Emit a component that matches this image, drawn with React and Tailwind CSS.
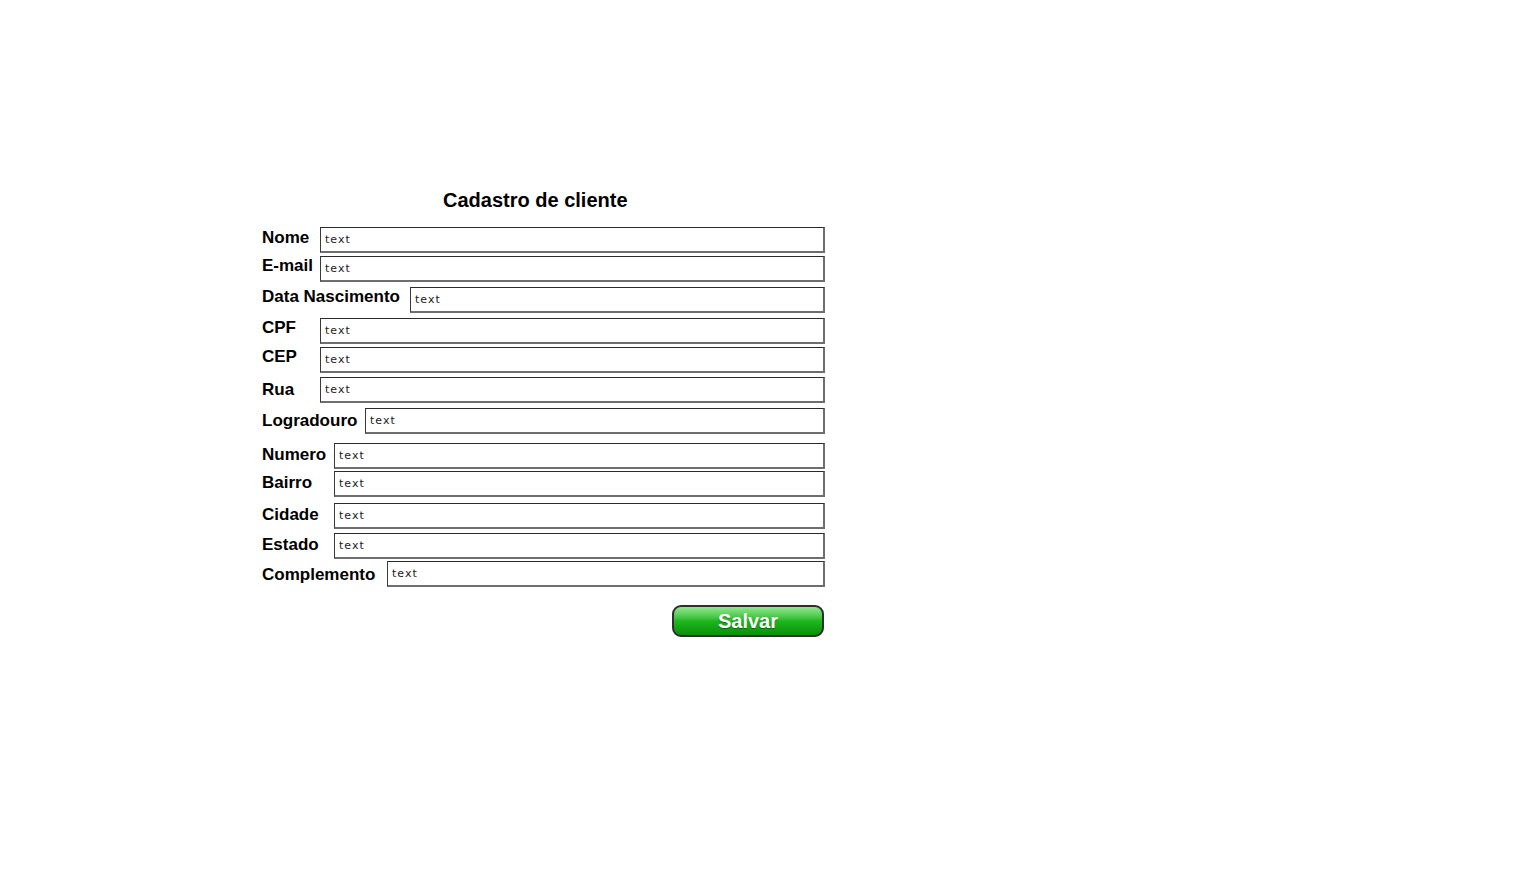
import React from "react";

const rows = [
  { label: "Nome", w: "w-[58px]", mt: "mt-0", pb: "pb-[4px]" },
  { label: "E-mail", w: "w-[58px]", mt: "mt-[3px]", pb: "pb-[6px]" },
  { label: "Data Nascimento", w: "w-[148px]", mt: "mt-[5px]", pb: "pb-[6px]" },
  { label: "CPF", w: "w-[58px]", mt: "mt-[5px]", pb: "pb-[6px]" },
  { label: "CEP", w: "w-[58px]", mt: "mt-[3px]", pb: "pb-[6px]" },
  { label: "Rua", w: "w-[58px]", mt: "mt-[4px]", pb: "pb-0" },
  { label: "Logradouro", w: "w-[103px]", mt: "mt-[5px]", pb: "pb-0" },
  { label: "Numero", w: "w-[72px]", mt: "mt-[9px]", pb: "pb-[2px]" },
  { label: "Bairro", w: "w-[72px]", mt: "mt-[2px]", pb: "pb-[2px]" },
  { label: "Cidade", w: "w-[72px]", mt: "mt-[6px]", pb: "pb-[2px]" },
  { label: "Estado", w: "w-[72px]", mt: "mt-[4px]", pb: "pb-[2px]" },
  { label: "Complemento", w: "w-[125px]", mt: "mt-[2px]", pb: "pt-[2px]" },
];

function Row({ label, w, mt, pb }) {
  return (
    <div className={`flex items-center h-[26px] ${mt}`}>
      <div className={`${w} shrink-0 ${pb} text-[17px] font-bold leading-[20px] text-black whitespace-nowrap`}>
        {label}
      </div>
      <div className="flex-1 h-[26px] flex items-center pl-[4px] pt-[2px] bg-white border-t border-l border-t-[#2a2a2a] border-l-[#3a3a3a] border-b-2 border-r-2 border-b-[#6e6e6e] border-r-[#6e6e6e] text-[11px] tracking-[1px] text-[#222] [font-family:'DejaVu_Sans',sans-serif]">
        text
      </div>
    </div>
  );
}

export default function App() {
  return (
    <div className="min-h-[885px] w-full bg-white [font-family:'Liberation_Sans',Arial,sans-serif]">
      <div className="pt-[189px] pl-[262px]">
        <div className="w-[563px] flex flex-col">
          <div className="pl-[181px] text-[20px] font-bold leading-[23px] text-black">
            Cadastro de cliente
          </div>
          <div className="mt-[15px] flex flex-col">
            {rows.map((r) => (
              <Row key={r.label} {...r} />
            ))}
          </div>
          <div className="mt-[18px] flex justify-end pr-[1px]">
            <button className="w-[152px] h-[32px] rounded-[9px] border-2 border-[#2e2e2e] bg-gradient-to-b from-[#8ee88e] via-[#1db81d] to-[#0a8f0a] text-white text-[20px] font-bold leading-none [text-shadow:0_1px_1px_rgba(0,0,0,0.4)]">
              Salvar
            </button>
          </div>
        </div>
      </div>
    </div>
  );
}
